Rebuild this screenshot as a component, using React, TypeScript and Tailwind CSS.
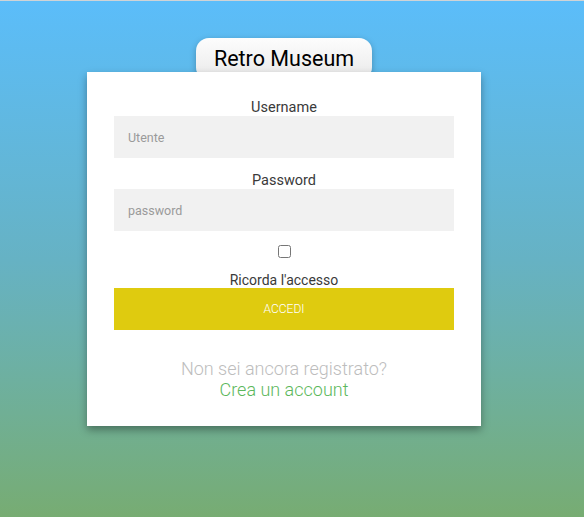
import React from "react";

export default function App() {
  return (
    <div
      className="w-[584px] h-[517px] overflow-hidden border-t border-[#cfd3d6] bg-gradient-to-b from-[#5bbdfa] via-[#66b2c4] to-[#77ac72]"
      style={{ fontFamily: "Roboto, 'Liberation Sans', sans-serif" }}
    >
      <div className="w-[568px] flex flex-col items-center pt-[37px]">
        <div className="w-[176px] h-[42px] rounded-[13px] bg-gradient-to-b from-[#fdfdfd] to-[#e9e9e9] shadow-[0_2px_6px_rgba(0,0,0,0.25)] flex justify-center pt-[8px] mb-[-8px]">
          <span className="text-[21.5px] leading-[26px] text-black">Retro Museum</span>
        </div>
        <div className="relative z-10 w-[394px] bg-white shadow-[0_4px_8px_rgba(0,0,0,0.35)] px-[27px] pt-[26px] pb-[26px] flex flex-col items-center">
          <label className="text-[14.5px] leading-[20px] text-[#3a3a3a]">Username</label>
          <input
            className="mt-[-2px] w-[340px] h-[42px] bg-[#f1f1f1] px-[14px] text-[12.5px] text-[#555] placeholder:text-[#9a9a9a] outline-none"
            placeholder="Utente"
          />
          <label className="mt-[13px] text-[14.5px] leading-[20px] text-[#3a3a3a]">Password</label>
          <input
            type="password"
            className="mt-[-2px] w-[340px] h-[42px] bg-[#f1f1f1] px-[14px] text-[12.5px] text-[#555] placeholder:text-[#9a9a9a] outline-none"
            placeholder="password"
          />
          <input type="checkbox" className="mt-[14px] w-[13px] h-[13px] m-0" />
          <label className="mt-[12px] text-[14px] leading-[20px] text-[#3a3a3a]">Ricorda l'accesso</label>
          <button className="mt-[-2px] w-[340px] h-[42px] bg-[#dfcb0f] text-white text-[12px] font-light">ACCEDI</button>
          <div className="mt-[28px] text-[18px] leading-[21px] font-light text-[#bdbdbd]">Non sei ancora registrato?</div>
          <a className="text-[18px] leading-[21px] font-light text-[#5cb85c]">Crea un account</a>
        </div>
      </div>
    </div>
  );
}
